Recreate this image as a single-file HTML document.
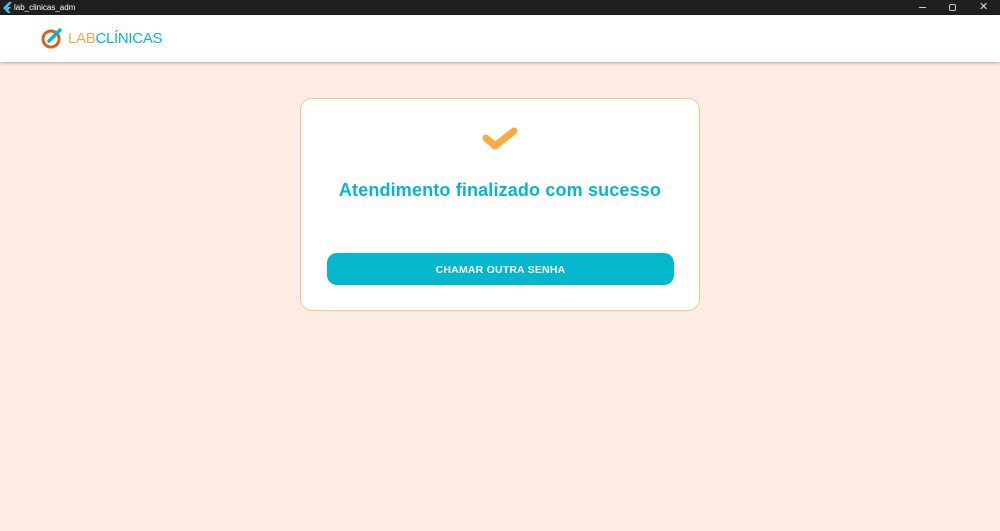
<!DOCTYPE html>
<html><head><meta charset="utf-8"><style>
*{margin:0;padding:0;box-sizing:border-box}
body{width:1000px;height:531px;background:#fdede5;font-family:"Liberation Sans",sans-serif;position:relative;overflow:hidden}
.tb{position:absolute;left:0;top:0;width:1000px;height:15px;background:#1f1f1f;color:#fff;font-size:8px}
.hdr{position:absolute;top:15px;left:0;width:1000px;height:47px;background:#fff;box-shadow:0 1px 3px rgba(0,0,0,.3)}
.card{position:absolute;left:300px;top:98px;width:400px;height:213px;background:#fff;border:1px solid #f7c48a;border-radius:12px}
.title{position:absolute;top:81px;width:100%;text-align:center;color:#06b6cc;font-weight:bold;font-size:18px;letter-spacing:.15px}
.btn{position:absolute;left:26px;top:154px;width:347px;height:32px;background:#06b6cc;border-radius:10px;color:#fff;font-weight:bold;font-size:10.5px;text-align:center;line-height:34px;letter-spacing:.2px}
</style></head><body>
<div class="tb">
<svg style="position:absolute;left:3px;top:2px" width="9" height="11"><path d="M6 0L0 6l2 2 7-8zM5 5L2 8l3 3h3L5 8l3-3z" fill="#4fc3f7"/></svg>
<span style="position:absolute;left:14px;top:3px">lab_clinicas_adm</span>
<div style="position:absolute;left:919px;top:7px;width:7px;height:1px;background:#ccc"></div>
<div style="position:absolute;left:949px;top:4px;width:7px;height:7px;border:1.5px solid #ccc;border-radius:2px"></div>
<span style="position:absolute;left:979px;top:0;font-size:11px;color:#ddd">✕</span>
</div>
<div class="hdr">
<svg style="position:absolute;left:40px;top:12px" width="24" height="24"><circle cx="11" cy="12" r="8" fill="none" stroke="#d4621c" stroke-width="3"/><path d="M9 14L20 3" stroke="#06b6cc" stroke-width="3.5" stroke-linecap="round"/></svg>
<div style="position:absolute;left:68px;top:15px;font-size:15px;letter-spacing:-.3px"><span style="color:#f7a94a">LAB</span><span style="color:#06b6cc">CLÍNICAS</span></div>
</div>
<div class="card">
<svg style="position:absolute;left:180px;top:27px" width="40" height="32"><path d="M5 12L14 20L33 5" fill="none" stroke="#fca93f" stroke-width="7" stroke-linecap="round" stroke-linejoin="round"/></svg>
<div class="title">Atendimento finalizado com sucesso</div>
<div class="btn">CHAMAR OUTRA SENHA</div>
</div>
</body></html>
